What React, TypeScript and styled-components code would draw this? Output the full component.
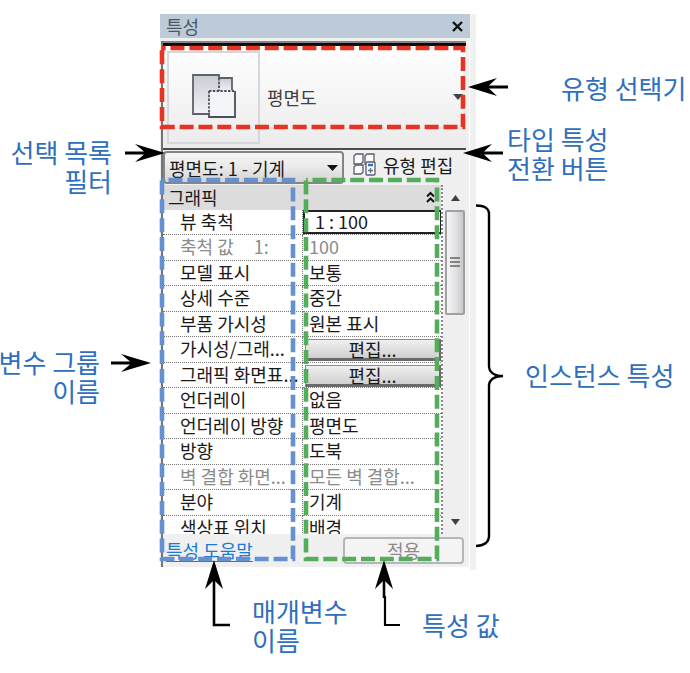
import React from "react";
import styled, { createGlobalStyle, css } from "styled-components";

const GlobalStyle = createGlobalStyle`
  *, *::before, *::after { box-sizing: border-box; }
  body {
    margin: 0;
    background: #ffffff;
    overflow-x: hidden;
    font-family: "Noto Sans CJK KR", "Noto Sans", sans-serif;
  }
  button, input, select { font: inherit; color: inherit; margin: 0; }
`;

const Diagram = styled.main`
  display: grid;
  grid-template-columns: minmax(0, 160fr) minmax(316px, 316fr) minmax(0, 214fr);
  padding: 14px 0 102px;
`;

const Figure = styled.div`
  grid-column: 2;
  position: relative;
`;

const Panel = styled.section`
  background: #f0f0f0;
  color: #1a1a1a;
  font-size: 18px;
  line-height: 24px;
`;

const TitleBar = styled.header`
  display: flex;
  align-items: center;
  justify-content: space-between;
  height: 24px;
  margin-right: 6px;
  padding: 0 7px 0 6px;
  background: #bdcbd9;
  color: #4b5864;
`;

const Title = styled.h1`
  margin: 0;
  font-size: 18px;
  font-weight: 400;
  line-height: 24px;
`;

const CloseButton = styled.button`
  display: flex;
  padding: 0;
  border: 0;
  background: none;
`;

const Body = styled.div`
  margin-top: 3px;
  margin-right: 6px;
  padding-right: 3px;
  border-right: 1px solid #ffffff;
  border-bottom: 3px solid #ffffff;
`;

const Frame = styled.div`
  margin-left: 1px;
  border-left: 2px solid #747474;
  padding-bottom: 1px;
`;

const TypeSelector = styled.button`
  display: flex;
  align-items: center;
  gap: 7px;
  width: 100%;
  height: 107px;
  padding: 0 0 0 4px;
  border: 0;
  border-top: 3px solid #0a0a0a;
  border-bottom: 2px solid #4c4c4c;
  background: linear-gradient(#ffffff, #ebebeb);
  color: #404040;
  text-align: left;
`;

const Shade = styled.div`
  height: 2px;
  background: #858585;
`;

const Thumbnail = styled.span`
  display: flex;
  align-items: center;
  justify-content: center;
  width: 93px;
  height: 93px;
  padding-bottom: 3px;
  border: 2px solid #d6d7da;
`;

const TypeName = styled.span`
  flex: 1;
`;

const FilterBar = styled.div`
  display: flex;
  align-items: center;
  gap: 9px;
  height: 35px;
`;

const FilterField = styled.label`
  position: relative;
  flex: 0 0 181px;
`;

const FilterSelect = styled.select`
  display: block;
  appearance: none;
  width: 100%;
  height: 33px;
  padding: 0 24px 0 4px;
  border: 2px solid #858585;
  border-radius: 4px;
  background: linear-gradient(#f6f6f6, #e9e9e9 50%, #d4d4d4);
`;

const FilterArrow = styled.svg`
  position: absolute;
  right: 6px;
  top: 14px;
  pointer-events: none;
`;

const EditType = styled.button`
  display: flex;
  align-items: center;
  gap: 7px;
  padding: 0 0 6px;
  border: 0;
  background: none;
  white-space: nowrap;
`;

const ListArea = styled.div`
  display: flex;
  height: 349px;
  overflow: hidden;
`;

const Properties = styled.table`
  flex: 1;
  align-self: flex-start;
  table-layout: fixed;
  border-collapse: separate;
  border-spacing: 0;
  background: #ffffff;
  border-right: 2px dotted #8a8a8a;
`;

const GroupHeading = styled.th`
  height: 25px;
  padding: 0 6px 0 5px;
  background: #dcdcdc;
  font-weight: 400;
  text-align: left;
  vertical-align: top;
`;

const GroupLine = styled.span`
  display: flex;
  align-items: center;
  justify-content: space-between;
`;

const Row = styled.tr<{ $muted?: boolean }>`
  height: 25px;
  line-height: 22px;
  white-space: nowrap;
  &:nth-child(even) { height: 26px; }
  ${(p) => p.$muted && css`color: #8b8b8b;`}
`;

const cell = css`
  padding: 0;
  border-bottom: 1px dotted #777777;
  font-weight: 400;
  text-align: left;
  vertical-align: top;
`;

const NameCell = styled.th`
  ${cell}
  width: 140px;
  padding-left: 17px;
  border-right: 1px dotted #777777;
  white-space: pre;
`;

const ValueCell = styled.td<{ $control?: boolean }>`
  ${cell}
  padding-left: ${(p) => (p.$control ? 0 : 6)}px;
`;

const ScaleInput = styled.input`
  display: block;
  width: 100%;
  height: 24px;
  padding: 0 10px 2px;
  border: 2px solid #222222;
  border-right-width: 1px;
  background: #ffffff;
`;

const EditButton = styled.button`
  display: block;
  width: calc(100% - 2px);
  height: 22px;
  margin: 2px 0 0 2px;
  padding: 0;
  border: 1px solid #8c8c8c;
  border-right: 2px solid #6a6a6a;
  border-bottom: 3px solid #6a6a6a;
  background: linear-gradient(#f0f0f0, #cfcfcf);
  line-height: 18px;
`;

const Scrollbar = styled.div`
  display: flex;
  flex-direction: column;
  flex: 0 0 23px;
  padding: 0 1px 0 2px;
  background: #efefef;
`;

const ScrollButton = styled.button`
  display: flex;
  align-items: center;
  justify-content: center;
  height: 25px;
  padding: 0;
  border: 0;
  background: none;
`;

const ScrollTrack = styled.div`
  flex: 1;
`;

const ScrollThumb = styled.div`
  display: flex;
  align-items: center;
  justify-content: center;
  height: 105px;
  border: 2px solid #a0a0a3;
  border-radius: 2px;
  background: linear-gradient(90deg, #f6f6f6, #e3e3e5 50%, #c9c9cd);
`;

const Footer = styled.footer`
  display: flex;
  align-items: center;
  justify-content: space-between;
  height: 32px;
  padding: 0 2px 0 3px;
`;

const HelpLink = styled.a`
  color: #1b7bd0;
  text-decoration: underline;
  text-underline-offset: 3px;
`;

const ApplyButton = styled.button`
  width: 121px;
  height: 27px;
  padding: 0;
  border: 2px solid #b3b7ba;
  border-radius: 4px;
  background: #f4f4f4;
  line-height: 22px;
  &:disabled { color: #8b8b8b; }
`;

/* Dashed outlines laid over the panel regions */
const Outline = styled.svg<{ $left: number; $top: number; $width: string; $height: number }>`
  position: absolute;
  left: ${(p) => p.$left}px;
  top: ${(p) => p.$top}px;
  width: ${(p) => p.$width};
  height: ${(p) => p.$height}px;
  overflow: visible;
  pointer-events: none;
`;

/* Callouts hang on the panel's left edge, right edge or origin */
const anchor = css<{ $side: "left" | "right" | "inside"; $x: number; $y: number }>`
  position: absolute;
  top: ${(p) => p.$y}px;
  ${(p) =>
    p.$side === "left"
      ? `right: calc(100% + ${p.$x}px);`
      : p.$side === "right"
        ? `left: calc(100% + ${p.$x}px);`
        : `left: ${p.$x}px;`}
`;

const Callout = styled.p`
  ${anchor}
  margin: 0;
  color: #2f6fbd;
  font-size: 26px;
  line-height: 29px;
  white-space: pre;
  text-align: ${(p) => (p.$side === "left" ? "right" : "left")};
`;

const Pointer = styled.svg`
  ${anchor}
  overflow: visible;
  pointer-events: none;
`;

type Kind = "text" | "input" | "button";
type Property = { name: string; value: string; kind?: Kind; muted?: boolean };

const properties: Property[] = [
  { name: "뷰 축척", value: "1 : 100", kind: "input" },
  { name: "축척 값     1:", value: "100", muted: true },
  { name: "모델 표시", value: "보통" },
  { name: "상세 수준", value: "중간" },
  { name: "부품 가시성", value: "원본 표시" },
  { name: "가시성/그래...", value: "편집...", kind: "button" },
  { name: "그래픽 화면표...", value: "편집...", kind: "button" },
  { name: "언더레이", value: "없음" },
  { name: "언더레이 방향", value: "평면도" },
  { name: "방향", value: "도북" },
  { name: "벽 결합 화면...", value: "모든 벽 결합...", muted: true },
  { name: "분야", value: "기계" },
  { name: "색상표 위치", value: "배경" },
];

function PlanIcon() {
  return (
    <svg width="46" height="46" viewBox="0 0 46 46" aria-hidden="true">
      <defs>
        <linearGradient id="sheet" x1="0" y1="0" x2="0" y2="1">
          <stop offset="0" stopColor="#c9ccd5" />
          <stop offset="1" stopColor="#f2f3f6" />
        </linearGradient>
      </defs>
      <rect x="28" y="5" width="13" height="14" fill="url(#sheet)" />
      <path d="M2 2H28V18H18V41H2Z" fill="url(#sheet)" />
      <path d="M18 41H2V2H28V5H41V17" fill="none" stroke="#5d616c" strokeWidth="1.8" />
      <path d="M18 18H44V44H18Z" fill="#f4f5f8" />
      <path d="M28 5V18M18 18H44M18 18V41" fill="none" stroke="#4b4f5a" strokeWidth="1.8" strokeDasharray="2.4 1.4" />
      <path d="M18 40V44H44V18" fill="none" stroke="#4b4f5a" strokeWidth="1.8" />
    </svg>
  );
}

function EditTypeIcon() {
  return (
    <svg width="23" height="23" viewBox="0 0 23 23" fill="#fbfbfb" stroke="#565c6c" strokeWidth="1.3" aria-hidden="true">
      <path d="M1 3L3 1H10V9L8 11H1Z" />
      <path d="M12 3L14 1H21V9L19 11H12Z" />
      <path d="M1 14L3 12H10V19L8 21H1Z" />
      <rect x="13" y="9" width="9" height="13" rx="1" />
      <path d="M15 12H20" stroke="#2d6fc0" strokeWidth="2.4" />
      <path d="M15 17.500H20M17.500 15V20" stroke="#5b6f93" />
    </svg>
  );
}

function Triangle({ up = false }: { up?: boolean }) {
  return (
    <svg width="9" height="6" viewBox="0 0 9 6" aria-hidden="true">
      <path d={up ? "M0 6L4.500 0L9 6Z" : "M0 0H9L4.500 6Z"} fill="#3f3f3f" />
    </svg>
  );
}

function DashedOutline(props: { left: number; top: number; width: string; height: number; color: string; offset: number }) {
  return (
    <Outline $left={props.left} $top={props.top} $width={props.width} $height={props.height} aria-hidden="true">
      <rect
        width="100%"
        height="100%"
        fill="none"
        stroke={props.color}
        strokeWidth="4.600"
        strokeDasharray="14.000 4.850"
        strokeDashoffset={props.offset}
      />
    </Outline>
  );
}

function Arrow({ side, x, y }: { side: "left" | "right"; x: number; y: number }) {
  return (
    <Pointer $side={side} $x={x} $y={y} width="40" height="18" viewBox="0 0 40 18" aria-hidden="true">
      {side === "left" ? (
        <path d="M0 7.400H19L10 0L40 9L10 18L19 10.600H0Z" />
      ) : (
        <path d="M40 7.400H21L29 0L0 9L29 18L21 10.600H40Z" />
      )}
    </Pointer>
  );
}

function PropertyValue({ item, labelId }: { item: Property; labelId: string }) {
  if (item.kind === "input") return <ScaleInput defaultValue={item.value} aria-labelledby={labelId} />;
  if (item.kind === "button")
    return (
      <EditButton type="button" aria-describedby={labelId}>
        {item.value}
      </EditButton>
    );
  return <>{item.value}</>;
}

export default function App() {
  return (
    <>
      <GlobalStyle />
      <Diagram>
        <Figure>
          <Panel>
            <TitleBar>
              <Title>특성</Title>
              <CloseButton type="button" aria-label="닫기">
                <svg width="11" height="11" viewBox="0 0 11 11" aria-hidden="true">
                  <path d="M1 1L10 10M10 1L1 10" stroke="#111" strokeWidth="2.400" />
                </svg>
              </CloseButton>
            </TitleBar>
            <Body>
              <Frame>
                <Shade />
                <TypeSelector type="button">
                  <Thumbnail>
                    <PlanIcon />
                  </Thumbnail>
                  <TypeName>평면도</TypeName>
                  <svg width="13" height="6" viewBox="0 0 13 6" aria-hidden="true">
                    <path d="M0 0H10L5 6Z" fill="#444" />
                  </svg>
                </TypeSelector>
                <FilterBar>
                  <FilterField>
                    <FilterSelect aria-label="선택 목록 필터" defaultValue="plan">
                      <option value="plan">평면도: 1 - 기계</option>
                    </FilterSelect>
                    <FilterArrow width="11" height="6" viewBox="0 0 11 6" aria-hidden="true">
                      <path d="M0 0H11L5.500 6Z" fill="#111" />
                    </FilterArrow>
                  </FilterField>
                  <EditType type="button">
                    <EditTypeIcon />
                    유형 편집
                  </EditType>
                </FilterBar>
                <ListArea>
                  <Properties>
                    <colgroup>
                      <col width="140" />
                      <col />
                    </colgroup>
                    <thead>
                      <tr>
                        <GroupHeading colSpan={2} scope="colgroup">
                          <GroupLine>
                            그래픽
                            <svg width="9" height="12" viewBox="0 0 9 12" fill="none" stroke="#111" strokeWidth="2" aria-hidden="true">
                              <path d="M1 5.500L4.500 2L8 5.500M1 11L4.500 7.500L8 11" />
                            </svg>
                          </GroupLine>
                        </GroupHeading>
                      </tr>
                    </thead>
                    <tbody>
                      {properties.map((item, i) => (
                        <Row key={item.name} $muted={item.muted}>
                          <NameCell id={`property-${i}`} scope="row">
                            {item.name}
                          </NameCell>
                          <ValueCell $control={!!item.kind}>
                            <PropertyValue item={item} labelId={`property-${i}`} />
                          </ValueCell>
                        </Row>
                      ))}
                    </tbody>
                  </Properties>
                  <Scrollbar>
                    <ScrollButton type="button" aria-label="위로">
                      <Triangle up />
                    </ScrollButton>
                    <ScrollTrack>
                      <ScrollThumb>
                        <svg width="10" height="11" viewBox="0 0 10 11" aria-hidden="true">
                          <path d="M0 1H10M0 5H10M0 9H10" stroke="#666" strokeWidth="1.500" />
                        </svg>
                      </ScrollThumb>
                    </ScrollTrack>
                    <ScrollButton type="button" aria-label="아래로">
                      <Triangle />
                    </ScrollButton>
                  </Scrollbar>
                </ListArea>
                <Footer>
                  <HelpLink href="#help">특성 도움말</HelpLink>
                  <ApplyButton type="button" disabled>
                    적용
                  </ApplyButton>
                </Footer>
              </Frame>
            </Body>
          </Panel>

          <DashedOutline left={2} top={34} width="calc(100% - 15px)" height={79} color="#e63323" offset={-8.5} />
          <DashedOutline left={2} top={166} width="131px" height={379} color="#6590d2" offset={-6.5} />
          <DashedOutline left={146} top={166} width="calc(100% - 185px)" height={379} color="#54ad5b" offset={-6.5} />

          <Callout $side="left" $x={48} $y={123}>{"선택 목록\n필터"}</Callout>
          <Arrow side="left" x={-5} y={130} />
          <Callout $side="left" $x={60} $y={333}>{"변수 그룹\n이름"}</Callout>
          <Arrow side="left" x={9} y={340} />

          <Callout $side="right" $x={85} $y={59}>유형 선택기</Callout>
          <Arrow side="right" x={-8} y={64} />
          <Callout $side="right" $x={31} $y={110}>{"타입 특성\n전환 버튼"}</Callout>
          <Arrow side="right" x={-13} y={130} />
          <Callout $side="right" $x={49} $y={346}>인스턴스 특성</Callout>
          <Pointer $side="right" $x={0} $y={190} width="28" height="344" viewBox="0 0 28 344" aria-hidden="true">
            <path
              d="M0 1.500C8 1.500 13 4 13 10V162C13 168 18 172 27 172C18 172 13 176 13 182V332C13 338 8 342 0 342"
              fill="none"
              stroke="#000"
              strokeWidth="2.400"
            />
          </Pointer>

          <Callout $side="inside" $x={92} $y={582}>{"매개변수\n이름"}</Callout>
          <Pointer $side="inside" $x={45} $y={546} width="26" height="67" viewBox="0 0 26 67" aria-hidden="true">
            <path d="M9 0L18 29L9 20L0 29Z" />
            <path d="M9 18V65H25" fill="none" stroke="#000" strokeWidth="2.600" />
          </Pointer>
          <Callout $side="inside" $x={262} $y={596}>특성 값</Callout>
          <Pointer $side="inside" $x={215} $y={546} width="26" height="67" viewBox="0 0 26 67" aria-hidden="true">
            <path d="M9 0L18 29L9 20L0 29Z" />
            <path d="M9 18V38" stroke="#000" strokeWidth="2.600" />
            <path d="M10 36V65H25" fill="none" stroke="#000" strokeWidth="2.200" />
          </Pointer>
        </Figure>
      </Diagram>
    </>
  );
}
